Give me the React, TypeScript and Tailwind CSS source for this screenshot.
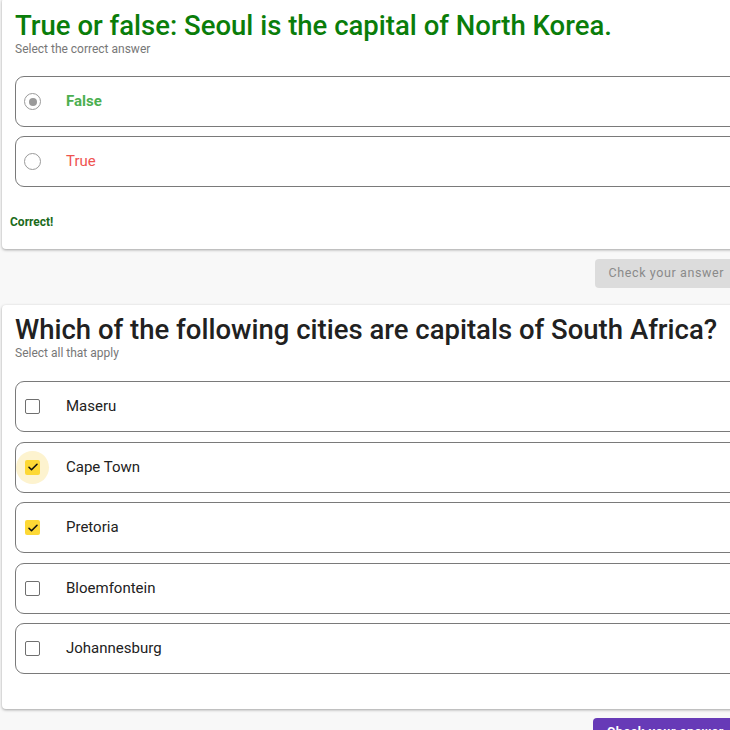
import React from "react";

type Opt = { label: string; checked?: boolean; halo?: boolean; tone?: "good" | "bad" };

const Radio = ({ checked }: { checked?: boolean }) => (
    <span className="flex h-[17px] w-[17px] items-center justify-center rounded-full border-[1.5px] border-[#9a9a9a]">
        {checked && <span className="h-[8px] w-[8px] rounded-full bg-[#9a9a9a]" />}
    </span>
);

const Check = ({ checked, halo }: { checked?: boolean; halo?: boolean }) => (
    <span className="relative flex h-[15px] w-[15px] items-center justify-center">
        {halo && <span className="absolute -left-[9px] -top-[9px] h-[33px] w-[33px] rounded-full bg-[#fdf3cf]" />}
        {checked ? (
            <span className="relative flex h-[15px] w-[15px] items-center justify-center rounded-[2px] bg-[#fdd835]">
                <svg width="12" height="12" viewBox="0 0 24 24" fill="none" stroke="#111" strokeWidth="3.2" strokeLinecap="round" strokeLinejoin="round">
                    <path d="M4 12.5l5 5L20 6.5" />
                </svg>
            </span>
        ) : (
            <span className="relative h-[15px] w-[15px] rounded-[2px] border-[1.5px] border-[#6f6f6f] bg-white" />
        )}
    </span>
);

const Option = ({ opt, kind }: { opt: Opt; kind: "radio" | "check" }) => {
    const labelCls =
        opt.tone === "good"
            ? "font-bold text-[#4caf50]"
            : opt.tone === "bad"
            ? "text-[#ef5350]"
            : "text-[#222]";
    return (
        <div className="flex h-[51px] items-center rounded-[9px] border border-[#7a7a7a] bg-white pl-[8px]">
            <span className="flex w-[17px] justify-center">
                {kind === "radio" ? <Radio checked={opt.checked} /> : <Check checked={opt.checked} halo={opt.halo} />}
            </span>
            <span className={`ml-[25px] text-[15px] ${labelCls}`}>{opt.label}</span>
        </div>
    );
};

const Card = ({ children, className }: { children: React.ReactNode; className?: string }) => (
    <div className={`ml-[2px] rounded-[4px] bg-white pl-[13px] shadow-[0_1px_3px_rgba(0,0,0,0.35)] ${className ?? ""}`}>
        {children}
    </div>
);

export default function App() {
    const q2: Opt[] = [
        { label: "Maseru" },
        { label: "Cape Town", checked: true, halo: true },
        { label: "Pretoria", checked: true },
        { label: "Bloemfontein" },
        { label: "Johannesburg" },
    ];

    return (
        <div className="h-[730px] w-[730px] overflow-hidden bg-[#f8f8f8]" style={{ fontFamily: "Roboto, 'Noto Sans', sans-serif" }}>
            <div className="w-[770px]">
                <Card className="-mt-[2px] pb-[19px] pt-[12px]">
                    <h1 className="text-[27.5px] font-medium leading-[32px] text-[#0a7d0a]">
                        True or false: Seoul is the capital of North Korea.
                    </h1>
                    <p className="text-[12px] leading-[14px] text-[#777]">Select the correct answer</p>
                    <div className="mt-[20px] flex flex-col gap-[9px]">
                        <Option kind="radio" opt={{ label: "False", checked: true, tone: "good" }} />
                        <Option kind="radio" opt={{ label: "True", tone: "bad" }} />
                    </div>
                    <p className="-ml-[5px] mt-[27px] text-[12px] font-bold leading-[16px] text-[#1b6b1b]">Correct!</p>
                </Card>
                <div className="mt-[10px] flex justify-end pr-[32px]">
                    <button className="h-[29px] rounded-[4px] bg-[#dcdcdc] px-[14px] text-[12.5px] tracking-[0.6px] text-[#8a8a8a]">
                        Check your answer
                    </button>
                </div>
                <Card className="mt-[17px] pb-[35px] pt-[9px]">
                    <h1 className="text-[27.5px] font-medium leading-[32px] text-[#212121]">
                        Which of the following cities are capitals of South Africa?
                    </h1>
                    <p className="text-[12px] leading-[14px] text-[#777]">Select all that apply</p>
                    <div className="mt-[21px] flex flex-col gap-[9.5px]">
                        {q2.map((o) => (
                            <Option key={o.label} kind="check" opt={o} />
                        ))}
                    </div>
                </Card>
                <div className="mt-[9px] flex justify-end pr-[32px]">
                    <button className="h-[29px] rounded-[4px] bg-[#673ab7] px-[14px] text-[12.5px] font-bold tracking-[0.6px] text-white">
                        Check your answer
                    </button>
                </div>
            </div>
        </div>
    );
}
